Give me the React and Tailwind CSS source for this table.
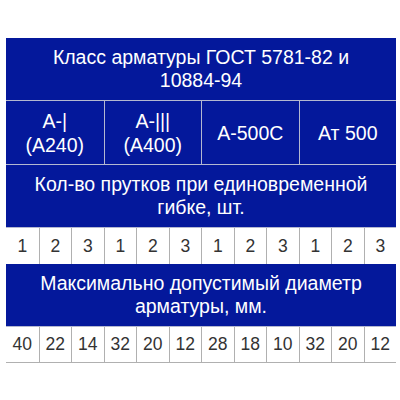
import React from 'react';

const counts = [1, 2, 3, 1, 2, 3, 1, 2, 3, 1, 2, 3];
const diameters = [40, 22, 14, 32, 20, 12, 28, 18, 10, 32, 20, 12];

const HeadRow = ({ children }) => (
  <div className="col-span-12 bg-[#04189b] text-white text-center text-[19.5px] leading-[23px] px-4 h-[63px] flex items-center justify-center border-b border-[#b4b8d0]">
    <span>{children}</span>
  </div>
);

const NumRow = ({ values, last }) =>
  values.map((v, i) => (
    <div
      key={i}
      className={
        'h-[36px] flex items-center justify-center bg-white text-[#333] text-[17.5px] border-[#b0b0b0] ' +
        (i > 0 ? 'border-l ' : '') +
        (last ? 'border-b' : '')
      }
    >
      {v}
    </div>
  ));

const App = () => {
  return (
    <div className="w-[400px] h-[400px] bg-white pt-[38px] px-[6px]" style={{ fontFamily: '"Liberation Sans", Arial, sans-serif' }}>
      <div className="grid grid-cols-12 w-[390px]">
        <HeadRow>
          Класс арматуры ГОСТ 5781-82 и
          <br />
          10884-94
        </HeadRow>

        {/* classes */}
        {['А-|\n(А240)', 'А-|||\n(А400)', 'А-500С', 'Ат 500'].map((t, i) => (
          <div
            key={i}
            className={
              'col-span-3 h-[64px] bg-[#04189b] text-white text-[19.5px] leading-[24px] flex items-center justify-center text-center whitespace-pre-line border-b border-[#b4b8d0] ' +
              (i > 0 ? 'border-l' : '')
            }
          >
            {t}
          </div>
        ))}

        <HeadRow>
          Кол-во прутков при единовременной
          <br />
          гибке, шт.
        </HeadRow>

        <NumRow values={counts} />

        <HeadRow>
          Максимально допустимый диаметр
          <br />
          арматуры, мм.
        </HeadRow>

        <NumRow values={diameters} last />
      </div>
    </div>
  );
};

export default App;
